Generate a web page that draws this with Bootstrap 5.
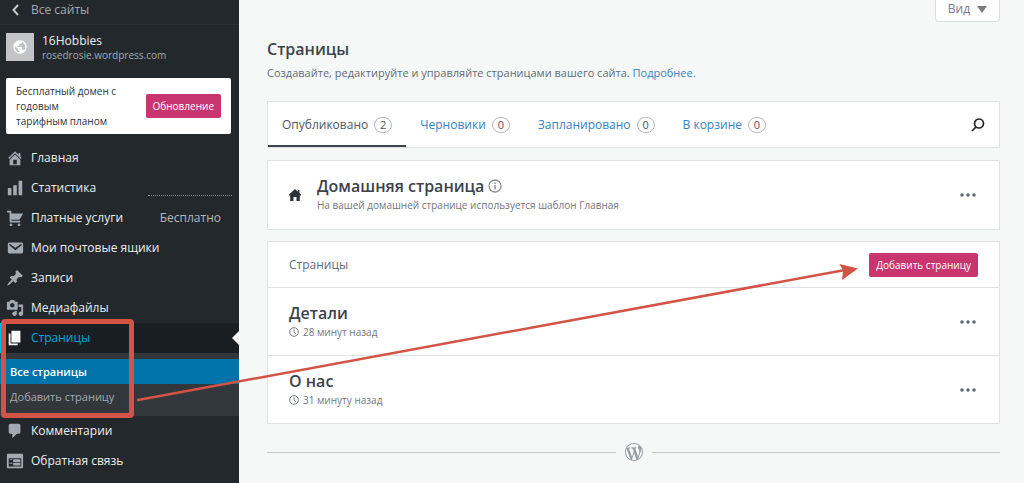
<!DOCTYPE html>
<html lang="ru">
<head>
<meta charset="utf-8">
<meta name="viewport" content="width=device-width, initial-scale=1">
<title>Страницы — 16Hobbies</title>
<link href="https://cdn.jsdelivr.net/npm/bootstrap@5.3.0/dist/css/bootstrap.min.css" rel="stylesheet">
<style>
body{font-family:"Open Sans","Noto Sans",sans-serif;font-size:12px;line-height:18px;color:#636d75;background:#f6f8f8}
a{text-decoration:none;color:#3582c4}
svg{display:block;flex:none;fill:currentColor}
.sidebar{width:239px;background:#23282d;color:#eee}
.sidebar a{color:#eee}
.sidebar .all-sites{height:25px;padding:1px 12px 6px;color:#a2aab2;border-bottom:1px solid #2c3035;gap:12px}
.site{padding:8px 6px;gap:8px;height:53px}
.site-icon{width:28px;height:28px;background:#c3c4c7;color:#fff}
.site-name{line-height:15px;font-size:12px}
.site-url{line-height:14px;font-size:10px;color:#a2aab2}
.promo{margin:0 8px 9px 6px;height:56px;padding:0 10px;border-radius:2px;color:#2c3338;font-size:10px;line-height:15px}
.btn-pink{--bs-btn-color:#fff;--bs-btn-bg:#c9356e;--bs-btn-hover-bg:#ab235a;--bs-btn-hover-color:#fff;--bs-btn-border-radius:2px;--bs-btn-border-width:0;--bs-btn-font-size:10px;--bs-btn-padding-x:7px;--bs-btn-padding-y:4px;line-height:16px;white-space:nowrap}
.side-link{display:flex;align-items:center;height:30px;padding:0 18px 0 6px;gap:7px}
.side-link svg{color:#a2aab2}
.side-link.current{background:#191e23;color:#00a5dc;position:relative;border-left:1px solid #00b9eb;padding-left:5px}
.side-link.current svg{color:#fff}
.side-link.current::after{content:"";position:absolute;right:0;top:8px;border:7px solid transparent;border-right-color:#f6f8f8;border-left-width:0}
.spark{width:84px;border-bottom:1px dotted #8c9298;margin-right:-11px;align-self:flex-end;margin-bottom:7px}
.plan{color:#b4b9be}
.submenu{background:#32373c;padding:6px 0 7px}
.submenu a{display:block;height:25px;line-height:25px;padding:0 10px;font-size:11px;color:#a5aaaf}
.submenu a.current{background:#0073aa;color:#fff;font-weight:600}
.content{padding:0 24px 0 28px}
.view-tab{background:#fff;border:1px solid #dcdfe1;border-top:0;border-radius:0 0 4px 4px;height:22px;width:65px;color:#787c82;padding:0 0 3px;gap:7px}
.page-title{font-size:16px;line-height:24px;font-weight:600;color:#3c434a;margin:15px 0 3px}
.intro{margin-bottom:19px;line-height:18px;font-size:11px}
.panel{background:#fff;border:1px solid #e0e2e3;margin-bottom:12px}
.panel.home-panel{margin-bottom:11px}
.tabs{height:47px;padding-right:14px}
.tabs a{display:flex;align-items:center;gap:6px;padding:0 14px;height:45px}
.tabs a.active{color:#50575e;border-bottom:2px solid #3c434a;padding-top:2px}
.count{border:1px solid #b4b9be;border-radius:8px;width:18px;height:16px;line-height:14px;font-size:11px;text-align:center;color:#50575e}
.plain{border:0;background:none;padding:0;color:#646970}
.entry{height:68px;padding:0 23px 0 21px}
.entry+.entry,.panel-head+.entry{border-top:1px solid #e0e2e3}
.entry h2{font-size:16px;line-height:22px;font-weight:600;color:#3c434a;margin:0}
.entry p{font-size:10px;line-height:16px;margin:0 0 2px;color:#72777c}
.panel-head{height:45px;padding:0 21px}
.foot{gap:9px;color:#9a9fa4;padding-top:7px}
.foot span{height:1px;background:#c3c6c8}
.frame{position:absolute;left:1px;top:319px;width:133px;height:99px;border:5px solid #d35345;border-radius:4px;pointer-events:none}
.arrow{position:absolute;left:0;top:0;pointer-events:none}
</style>
</head>
<body>
<div class="d-flex min-vh-100 position-relative overflow-hidden">
<nav class="sidebar flex-shrink-0" aria-label="Меню сайта">
  <a href="#" class="all-sites d-flex align-items-center"><svg width="7" height="12" viewBox="0 0 7 12"><path d="M6 1 1.500 6 6 11" fill="none" stroke="#c3c8cc" stroke-width="2"/></svg>Все сайты</a>
  <div class="site d-flex">
    <div class="site-icon d-flex align-items-center justify-content-center"><svg width="16" height="16" viewBox="0 0 24 24"><path d="M12 2C6.480 2 2 6.480 2 12s4.480 10 10 10 10-4.480 10-10S17.520 2 12 2zm-1 17.930c-3.950-.49-7-3.850-7-7.930 0-.62.08-1.210.21-1.790L9 15v1c0 1.100.9 2 2 2v1.930zm6.900-2.540c-.26-.81-1-1.390-1.900-1.390h-1v-3c0-.55-.45-1-1-1H8v-2h2c.55 0 1-.45 1-1V7h2c1.100 0 2-.9 2-2v-.41c2.930 1.190 5 4.060 5 7.410 0 2.080-.8 3.970-2.100 5.390z"/></svg></div>
    <div><div class="site-name">16Hobbies</div><div class="site-url">rosedrosie.wordpress.com</div></div>
  </div>
  <div class="promo bg-white d-flex align-items-center justify-content-between">
    <div>Бесплатный домен с<br>годовым<br>тарифным планом</div>
    <button type="button" class="btn btn-pink">Обновление</button>
  </div>
  <a class="side-link" href="#"><svg width="18" height="18" viewBox="0 0 20 20"><path d="M16 8.500l1.530 1.530-1.060 1.060L10 4.600l-6.470 6.490-1.060-1.060L10 2.500l4 4v-2h2v4zm-6-2.460l6 5.990V18H4v-5.970zM12 17v-5H8v5h4z"/></svg>Главная</a>
  <a class="side-link" href="#"><svg width="18" height="18" viewBox="0 0 20 20"><path d="M18 18V2h-4v16h4zm-6 0V7H8v11h4zm-6 0v-8H2v8h4z"/></svg>Статистика<span class="spark ms-auto"></span></a>
  <a class="side-link" href="#"><svg width="18" height="18" viewBox="0 0 20 20"><path d="M6 13h9c.55 0 1 .45 1 1s-.45 1-1 1H5c-.55 0-1-.45-1-1V4H2c-.55 0-1-.45-1-1s.45-1 1-1h3c.55 0 1 .45 1 1v2h13l-4 7H6v1zm-.5 3c.83 0 1.500.67 1.500 1.500S6.330 19 5.500 19 4 18.330 4 17.500 4.670 16 5.500 16zm9 0c.83 0 1.500.67 1.500 1.500s-.67 1.500-1.500 1.500-1.500-.67-1.500-1.500.67-1.500 1.500-1.500z"/></svg>Платные услуги<span class="plan ms-auto">Бесплатно</span></a>
  <a class="side-link" href="#"><svg width="18" height="18" viewBox="0 0 20 20"><path d="M3.870 4h13.250C18.370 4 19 4.590 19 5.790v8.420c0 1.190-.63 1.790-1.880 1.790H3.870c-1.250 0-1.880-.6-1.880-1.790V5.790c0-1.200.63-1.790 1.880-1.790zm6.620 8.600l6.740-5.530c.24-.2.43-.66.13-1.070-.29-.41-.82-.42-1.170-.17l-5.700 3.860L4.800 5.830c-.35-.25-.88-.24-1.170.17-.3.41-.11.87.13 1.070z"/></svg>Мои почтовые ящики</a>
  <a class="side-link" href="#"><svg width="18" height="18" viewBox="0 0 20 20"><path d="M10.440 3.020l1.820-1.820 6.360 6.350-1.830 1.820c-1.050-.68-2.480-.57-3.410.36l-.75.75c-.92.93-1.040 2.350-.35 3.410l-1.830 1.820-2.410-2.410-2.800 2.790c-.42.42-3.380 2.710-3.800 2.290s1.860-3.390 2.280-3.810l2.790-2.790L4.100 9.360l1.830-1.820c1.050.69 2.480.57 3.400-.36l.75-.75c.93-.92 1.050-2.350.36-3.410z"/></svg>Записи</a>
  <a class="side-link" href="#"><svg width="18" height="18" viewBox="0 0 20 20"><path d="M13 11V4c0-.55-.45-1-1-1h-1.670L9 1H5L3.670 3H2c-.55 0-1 .45-1 1v7c0 .55.45 1 1 1h10c.55 0 1-.45 1-1zM7 4.500c1.380 0 2.500 1.120 2.500 2.500S8.380 9.500 7 9.500 4.500 8.380 4.500 7 5.620 4.500 7 4.500zM14 6h5v10.500c0 1.380-1.120 2.500-2.500 2.500S14 17.880 14 16.500s1.120-2.500 2.500-2.500c.17 0 .34.02.5.05V9h-3V6zm-4 8.050V13h2v3.500c0 1.380-1.120 2.500-2.500 2.500S7 17.880 7 16.500 8.120 14 9.500 14c.17 0 .34.02.5.05z"/></svg>Медиафайлы</a>
  <a class="side-link current" href="#"><svg width="18" height="18" viewBox="0 0 20 20"><path d="M6 15V2h10v13H6zm-1 1h8v2H3V5h2v11z"/></svg>Страницы</a>
  <div class="submenu"><a class="current" href="#">Все страницы</a><a href="#">Добавить страницу</a></div>
  <a class="side-link" href="#"><svg width="18" height="18" viewBox="0 0 20 20"><path d="M5 2h9c1.100 0 2 .9 2 2v7c0 1.100-.9 2-2 2h-2l-5 5v-5H5c-1.100 0-2-.9-2-2V4c0-1.100.9-2 2-2z"/></svg>Комментарии</a>
  <a class="side-link" href="#"><svg width="18" height="18" viewBox="0 0 20 20"><path d="M2 2h16c.55 0 1 .45 1 1v14c0 .55-.45 1-1 1H2c-.55 0-1-.45-1-1V3c0-.55.45-1 1-1zm15 14V7H3v9h14zM4 8v1h3V8H4zm4 0v3h8V8H8zm-4 4v1h3v-1H4zm4 0v3h8v-3H8z"/></svg>Обратная связь</a>
</nav>
<main class="content flex-grow-1">
  <button type="button" class="view-tab d-flex align-items-center justify-content-center ms-auto">Вид<svg width="10" height="7" viewBox="0 0 10 7"><path d="M0 0h10L5 7z"/></svg></button>
  <h1 class="page-title">Страницы</h1>
  <p class="intro">Создавайте, редактируйте и управляйте страницами вашего сайта. <a href="#">Подробнее.</a></p>
  <div class="panel tabs d-flex align-items-center">
    <a href="#" class="active" aria-current="page">Опубликовано<span class="count">2</span></a>
    <a href="#">Черновики<span class="count">0</span></a>
    <a href="#">Запланировано<span class="count">0</span></a>
    <a href="#">В корзине<span class="count">0</span></a>
    <button type="button" class="plain ms-auto" aria-label="Поиск"><svg width="14" height="14" viewBox="0 0 14 14" fill="none" stroke="#1d2327" stroke-width="1.700"><circle cx="8" cy="5.500" r="4.500" fill="none"/><path d="M5 9 1 13"/></svg></button>
  </div>
  <section class="panel home-panel">
    <div class="entry d-flex align-items-center">
      <svg class="me-3" width="12" height="12" viewBox="0 0 12 12" color="#2c3338"><path d="M6 0 9 2.700V1h1.500v3L12 5.500V6.500h-1.200V12H7.500V8h-3v4H1.200V6.500H0V5.500z"/></svg>
      <div><h2 class="d-flex align-items-center gap-1">Домашняя страница<svg width="14" height="14" viewBox="0 0 14 14" color="#8c9298"><circle cx="7" cy="7" r="6" fill="none" stroke="currentColor" stroke-width="1.300"/><path d="M6.300 6h1.500v4.500H6.300zM6.300 3.500h1.500V5H6.300z"/></svg></h2><p>На вашей домашней странице используется шаблон Главная</p></div>
      <button type="button" class="plain ms-auto" aria-label="Действия"><svg width="16" height="4" viewBox="0 0 16 4"><circle cx="2" cy="2" r="1.800"/><circle cx="8" cy="2" r="1.800"/><circle cx="14" cy="2" r="1.800"/></svg></button>
    </div>
  </section>
  <section class="panel">
    <div class="panel-head d-flex align-items-center justify-content-between"><span>Страницы</span><button type="button" class="btn btn-pink">Добавить страницу</button></div>
    <div class="entry d-flex align-items-center">
      <div><h2>Детали</h2><p class="d-flex align-items-center gap-1"><svg width="10" height="10" viewBox="0 0 10 10"><path d="M5 2.500V5.200L6.800 6.800" fill="none" stroke="currentColor"/><circle cx="5" cy="5" r="4.300" fill="none" stroke="currentColor"/></svg>28 минут назад</p></div>
      <button type="button" class="plain ms-auto" aria-label="Действия"><svg width="16" height="4" viewBox="0 0 16 4"><circle cx="2" cy="2" r="1.800"/><circle cx="8" cy="2" r="1.800"/><circle cx="14" cy="2" r="1.800"/></svg></button>
    </div>
    <div class="entry d-flex align-items-center">
      <div><h2>О нас</h2><p class="d-flex align-items-center gap-1"><svg width="10" height="10" viewBox="0 0 10 10"><path d="M5 2.500V5.200L6.800 6.800" fill="none" stroke="currentColor"/><circle cx="5" cy="5" r="4.300" fill="none" stroke="currentColor"/></svg>31 минуту назад</p></div>
      <button type="button" class="plain ms-auto" aria-label="Действия"><svg width="16" height="4" viewBox="0 0 16 4"><circle cx="2" cy="2" r="1.800"/><circle cx="8" cy="2" r="1.800"/><circle cx="14" cy="2" r="1.800"/></svg></button>
    </div>
  </section>
  <div class="foot d-flex align-items-center"><span class="flex-grow-1"></span><svg width="18" height="18" viewBox="0 0 20 20"><path d="M20 10c0-5.510-4.490-10-10-10C4.480 0 0 4.490 0 10c0 5.520 4.480 10 10 10 5.510 0 10-4.480 10-10zM7.780 15.370L4.370 6.220c.55-.02 1.170-.08 1.170-.08.5-.06.44-1.130-.06-1.110 0 0-1.450.11-2.370.11-.18 0-.37 0-.58-.01C4.120 2.690 6.870 1.110 10 1.110c2.330 0 4.450.87 6.050 2.340-.68-.11-1.650.39-1.650 1.580 0 .74.45 1.360.9 2.100.35.61.55 1.360.55 2.460 0 1.490-1.400 5-1.400 5l-3.030-8.370c.54-.02.82-.17.82-.17.5-.05.44-1.250-.06-1.220 0 0-1.440.12-2.380.12-.87 0-2.330-.12-2.330-.12-.5-.03-.56 1.200-.06 1.220l.92.08 1.260 3.410zM17.410 10c.24-.64.74-1.870.43-4.250.7 1.290 1.050 2.710 1.050 4.250 0 3.290-1.730 6.240-4.400 7.780.97-2.590 1.940-5.200 2.920-7.780zM6.100 18.090C3.120 16.650 1.110 13.530 1.110 10c0-1.300.23-2.480.72-3.590C3.250 10.300 4.670 14.200 6.100 18.090zm4.030-6.630l2.580 6.980c-.86.29-1.760.45-2.710.45-.79 0-1.570-.11-2.290-.33.81-2.380 1.620-4.740 2.420-7.100z"/></svg><span class="flex-grow-1"></span></div>
</main>
<div class="frame"></div>
<svg class="arrow" width="870" height="420" viewBox="0 0 870 420" color="#d35345" aria-hidden="true"><path d="M138 400 845 270" stroke="currentColor" stroke-width="2.500" stroke-linecap="round"/><path d="M858 268.500 839.500 264 843 270.500 842 280z"/></svg>
</div>
<script src="https://cdn.jsdelivr.net/npm/bootstrap@5.3.0/dist/js/bootstrap.bundle.min.js"></script>
</body>
</html>
